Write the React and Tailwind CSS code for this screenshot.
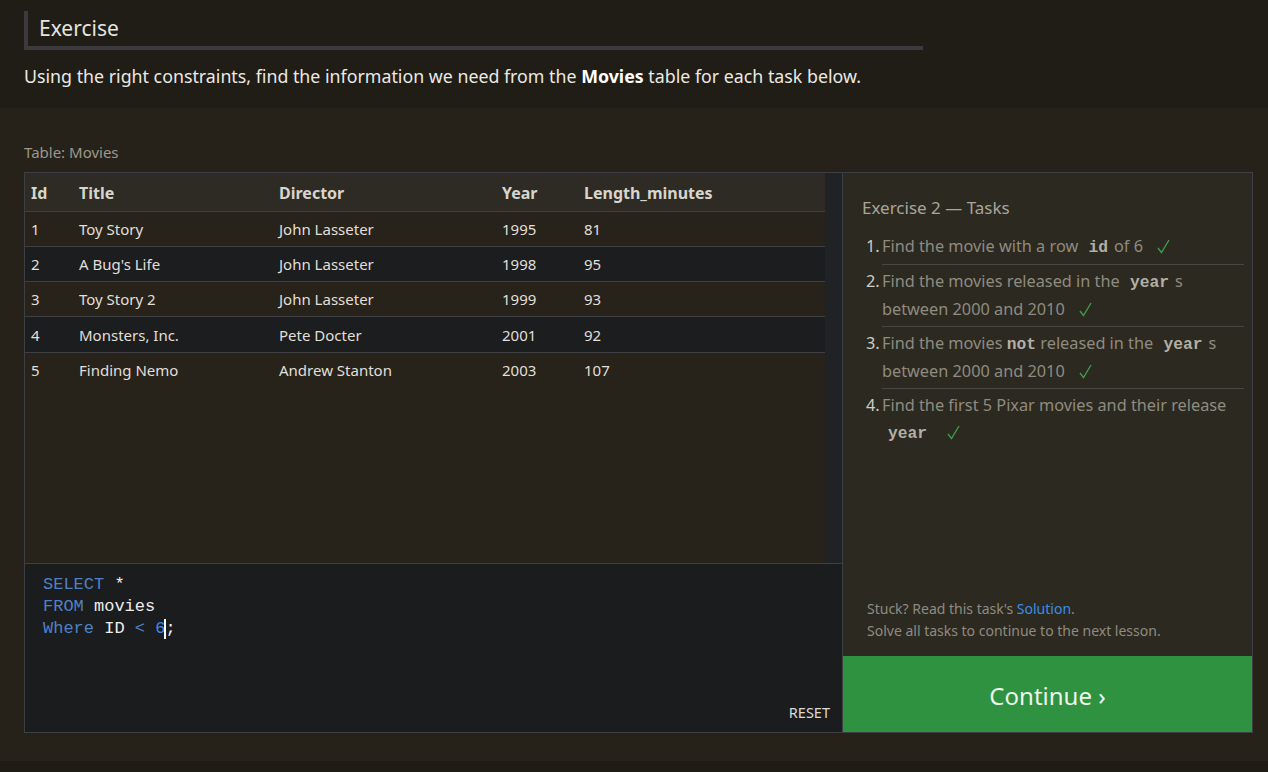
import React from "react";

const movies = [
  { id: 1, title: "Toy Story", director: "John Lasseter", year: 1995, length: 81 },
  { id: 2, title: "A Bug's Life", director: "John Lasseter", year: 1998, length: 95 },
  { id: 3, title: "Toy Story 2", director: "John Lasseter", year: 1999, length: 93 },
  { id: 4, title: "Monsters, Inc.", director: "Pete Docter", year: 2001, length: 92 },
  { id: 5, title: "Finding Nemo", director: "Andrew Stanton", year: 2003, length: 107 },
];

function Code({ children }) {
  return (
    <code className="font-['Liberation_Mono',monospace] font-bold text-[#b3afa5] px-[6px]">
      {children}
    </code>
  );
}

function Check() {
  return (
    <svg
      className="inline-block ml-[10px] -mt-[3px] align-middle"
      width="13"
      height="15"
      viewBox="0 0 13 15"
      fill="none"
      stroke="#3f9a4c"
      strokeWidth="1.4"
    >
      <path d="M1 9 L4.5 13.5 L12 1" />
    </svg>
  );
}

export default function App() {
  return (
    <div className="min-h-screen bg-[#262219] font-['Noto_Sans',sans-serif] flex flex-col">
      <header className="bg-[#201d16] h-[108px] px-6 pt-[11px]">
        <div className="w-[899px] h-[39px] border-l-4 border-b-4 border-[#3b3b3f] pl-[11px] flex items-center">
          <h1 className="text-[21px] text-[#e6e4de] leading-none">Exercise</h1>
        </div>
        <p className="mt-[13px] text-[17.8px] text-[#ebe9e4]">
          Using the right constraints, find the information we need from the{" "}
          <strong className="font-bold text-white">Movies</strong> table for each task below.
        </p>
      </header>

      <main className="px-6 pt-[34px] pb-[28px]">
        <p className="text-[15px] text-[#9c978b] leading-5 mb-[10px]">Table: Movies</p>

        <div className="flex w-[1229px] h-[561px] border border-[#3c3f43]">
          <div className="w-[817px] flex flex-col">
            <div className="flex flex-1 min-h-0">
              <div className="flex-1 bg-[#27231b]">
                <table className="w-full border-collapse text-left text-[15px] text-[#e2dfd8]">
                  <thead>
                    <tr className="bg-[#2d2b23] h-[38px] border-b border-[#3d3f42]">
                      <th className="w-[47px] pl-[6px] pt-[2px] font-bold text-[16px] text-[#d8d5cd]">Id</th>
                      <th className="w-[200px] pl-[7px] pt-[2px] font-bold text-[16px] text-[#d8d5cd]">Title</th>
                      <th className="w-[223px] pl-[7px] pt-[2px] font-bold text-[16px] text-[#d8d5cd]">Director</th>
                      <th className="w-[82px] pl-[7px] pt-[2px] font-bold text-[16px] text-[#d8d5cd]">Year</th>
                      <th className="pl-[7px] pt-[2px] font-bold text-[16px] text-[#d8d5cd]">Length_minutes</th>
                    </tr>
                  </thead>
                  <tbody>
                    {movies.map((m, i) => (
                      <tr
                        key={m.id}
                        className={
                          i % 2 === 1
                            ? "h-[35.3px] bg-[#1b1d1f] border-b border-[#3d3f42]"
                            : "h-[35.3px] bg-[#27231b] border-b border-[#3d3f42] last:border-b-0"
                        }
                      >
                        <td className="pl-[6px] pt-[1px]">{m.id}</td>
                        <td className="pl-[7px] pt-[1px]">{m.title}</td>
                        <td className="pl-[7px] pt-[1px]">{m.director}</td>
                        <td className="pl-[7px] pt-[1px]">{m.year}</td>
                        <td className="pl-[7px] pt-[1px]">{m.length}</td>
                      </tr>
                    ))}
                  </tbody>
                </table>
              </div>
              <div className="w-[17px] bg-[#1f2326]" />
            </div>

            <div className="h-[169px] bg-[#1b1c1e] border-t border-[#3c3f43] relative pl-[18px] pt-[10px] font-['Liberation_Mono',monospace] text-[17px] leading-[22px] text-[#eeeeee]">
              <div>
                <span className="text-[#4f82c4]">SELECT</span> *
              </div>
              <div>
                <span className="text-[#4f82c4]">FROM</span> movies
              </div>
              <div>
                <span className="text-[#4f82c4]">Where</span> ID <span className="text-[#4f82c4]">&lt;</span>{" "}
                <span className="text-[#3d8ae6]">6</span>
                <span className="inline-block w-[2px] h-[20px] bg-white align-middle -mx-[1px]" />;
              </div>
              <button className="absolute right-[12px] bottom-[9px] font-['Noto_Sans',sans-serif] text-[14.5px] text-[#dedbd3]">
                RESET
              </button>
            </div>
          </div>

          <aside className="flex-1 flex flex-col bg-[#2c2920] border-l border-[#3c3f43]">
            <div className="flex-1 flex flex-col px-[19px] pt-[23px]">
              <h2 className="text-[17px] text-[#a9a59a] leading-6">Exercise 2 — Tasks</h2>
              <ol className="mt-[10px] text-[16.3px] text-[#8f8b80] leading-[27px]">
                <li className="flex">
                  <span className="w-[20px] pl-[4px] pt-[3px] text-[#cfccc4]">1.</span>
                  <span className="flex-1 border-b border-[#464743] py-[3px] mr-[-11px]">
                    Find the movie with a row <Code>id</Code>of 6 <Check />
                  </span>
                </li>
                <li className="flex">
                  <span className="w-[20px] pl-[4px] pt-[3px] text-[#cfccc4]">2.</span>
                  <span className="flex-1 border-b border-[#464743] py-[3px] mr-[-11px]">
                    Find the movies released in the <Code>year</Code>s between 2000 and 2010 <Check />
                  </span>
                </li>
                <li className="flex">
                  <span className="w-[20px] pl-[4px] pt-[3px] text-[#cfccc4]">3.</span>
                  <span className="flex-1 border-b border-[#464743] py-[3px] mr-[-11px]">
                    Find the movies{" "}
                    <strong className="font-['Liberation_Mono',monospace] font-bold text-[#b3afa5]">not</strong>{" "}
                    released in the <Code>year</Code>s between 2000 and 2010 <Check />
                  </span>
                </li>
                <li className="flex">
                  <span className="w-[20px] pl-[4px] pt-[3px] text-[#cfccc4]">4.</span>
                  <span className="flex-1 py-[3px]">
                    Find the first 5 Pixar movies and their release <Code>year</Code> <Check />
                  </span>
                </li>
              </ol>

              <div className="mt-auto pb-[14px] pl-[5px] text-[14px] leading-[22px] text-[#8f8b80]">
                <p>
                  Stuck? Read this task's <a className="text-[#3a8ee6]">Solution</a>.
                </p>
                <p>Solve all tasks to continue to the next lesson.</p>
              </div>
            </div>
            <button className="h-[76px] bg-[#2e9240] text-[24px] text-[#eef5ec] flex items-center justify-center pt-[3px]">
              Continue ›
            </button>
          </aside>
        </div>
      </main>

      <div className="flex-1 bg-[#1f1c15]" />
    </div>
  );
}
